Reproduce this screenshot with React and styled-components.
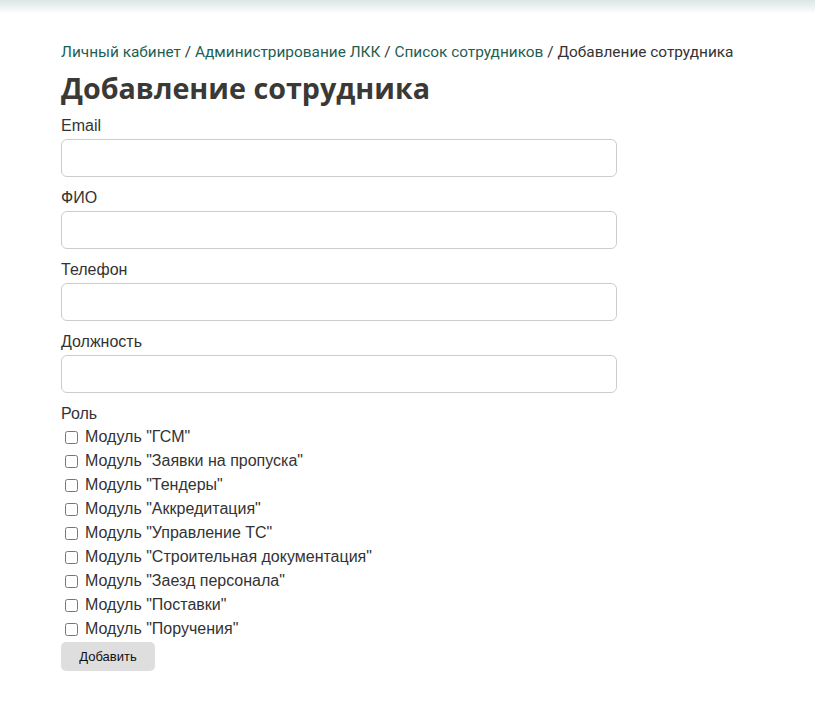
import React from 'react';
import styled, {createGlobalStyle} from 'styled-components';

const GlobalStyle = createGlobalStyle`
    body {
        margin: 0;
        background: #fff;
        font-family: "Liberation Sans", Arial, sans-serif;
        color: #333;
    }
`

const TopShade = styled.div`
    height: 14px;
    background: linear-gradient(to bottom, #dbe7e5, #ffffff);
`

const Page = styled.div`
    padding: 26px 61px 40px;
`

const Breadcrumbs = styled.nav`
    font-family: Roboto, "Liberation Sans", sans-serif;
    font-size: 15.4px;
    line-height: 24px;
    color: #333;
    white-space: nowrap;
`

const Crumb = styled.a`
    color: #1d5f52;
    text-decoration: none;
`

const Title = styled.h1`
    margin: 6px 0 10px;
    font-family: "Open Sans", "Liberation Sans", sans-serif;
    font-weight: 700;
    font-size: 28.7px;
    line-height: 36px;
    color: #3a3935;
`

const Form = styled.form`
    display: flex;
    flex-direction: column;
`

const Label = styled.label`
    font-size: 16px;
    line-height: 20px;
    margin-bottom: 3px;
`

const Input = styled.input`
    box-sizing: border-box;
    width: 556px;
    height: 38px;
    margin: 0 0 11px;
    border: 1px solid #ccc;
    border-radius: 6px;
    padding: 6px 12px;
    font-size: 16px;
`

const Checks = styled.div`
    display: flex;
    flex-direction: column;
    margin-top: -2px;
`

const CheckRow = styled.label`
    display: flex;
    align-items: center;
    height: 24px;
    font-size: 16px;
`

const Box = styled.input`
    width: 13px;
    height: 13px;
    margin: 0 7px 0 4px;
`

const Button = styled.button`
    align-self: flex-start;
    margin-top: 1px;
    width: 94px;
    height: 29px;
    border: none;
    border-radius: 5px;
    background: #dedede;
    font-family: "Liberation Sans", Arial, sans-serif;
    font-size: 13px;
    color: #111;
`

const fields = ['Email', 'ФИО', 'Телефон', 'Должность']

const modules = [
    'ГСМ',
    'Заявки на пропуска',
    'Тендеры',
    'Аккредитация',
    'Управление ТС',
    'Строительная документация',
    'Заезд персонала',
    'Поставки',
    'Поручения'
]

export default function App() {
    return (
        <>
            <GlobalStyle/>
            <TopShade/>
            <Page>
                <Breadcrumbs>
                    <Crumb href='#'>Личный кабинет</Crumb> / <Crumb href='#'>Администрирование ЛКК</Crumb> / <Crumb href='#'>Список сотрудников</Crumb> / <span>Добавление сотрудника</span>
                </Breadcrumbs>
                <Title>Добавление сотрудника</Title>
                <Form onSubmit={e => e.preventDefault()}>
                    {fields.map(f => (
                        <React.Fragment key={f}>
                            <Label>{f}</Label>
                            <Input type='text'/>
                        </React.Fragment>
                    ))}
                    <Label>Роль</Label>
                    <Checks>
                        {modules.map(m => (
                            <CheckRow key={m}>
                                <Box type='checkbox'/>
                                Модуль "{m}"
                            </CheckRow>
                        ))}
                    </Checks>
                    <Button type='submit'>Добавить</Button>
                </Form>
            </Page>
        </>
    )
}
